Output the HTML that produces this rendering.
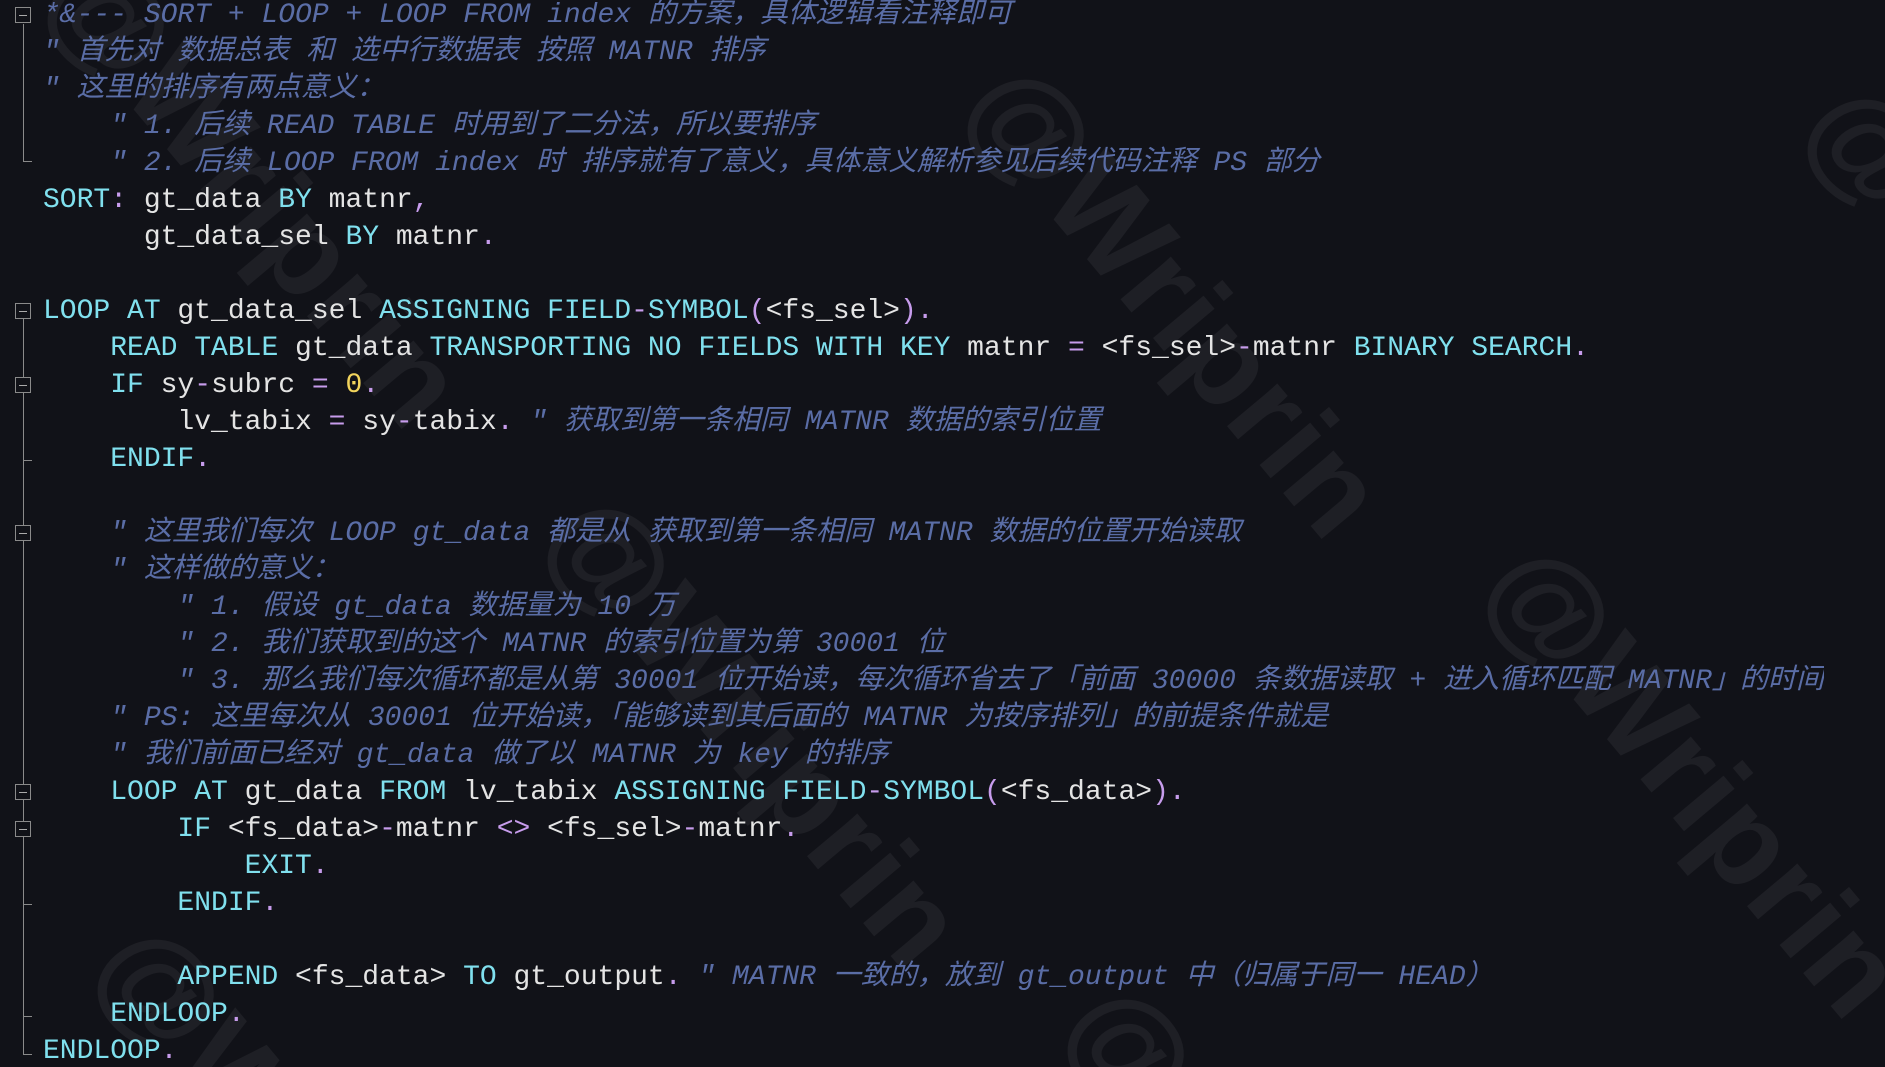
<!DOCTYPE html>
<html><head><meta charset="utf-8">
<style>
html,body{margin:0;padding:0;width:1885px;height:1067px;overflow:hidden}
body{background:#111218;font-family:"Liberation Mono","Noto Sans CJK SC",monospace;}
#wrap{position:relative;width:1885px;height:1067px;overflow:hidden;background:#111218}
.wm{position:absolute;font-family:"Liberation Sans",sans-serif;font-weight:bold;font-size:125px;line-height:125px;color:#1e1f25;transform:rotate(50deg);transform-origin:0 0;white-space:nowrap;letter-spacing:2px}
pre{position:absolute;left:43px;top:-3px;height:1068px;overflow:hidden;margin:0;font-size:28px;line-height:37px;color:#e4e4e4;font-family:"Liberation Mono","Noto Sans CJK SC",monospace;}
.k{color:#80e0ee}.p{color:#c79cec}.n{color:#f2d45c}
.c{color:#5a6da6;font-style:italic}
.g{position:absolute;background:#8a8a8a}
.b{position:absolute;width:16px;height:16px;border:1px solid #8a8a8a;box-sizing:border-box;background:#111218}
.b:after{content:"";position:absolute;left:3px;right:3px;top:7px;height:1px;background:#aaa}
</style></head><body><div id="wrap">
<div class="wm" style="left:120px;top:-70px">@Wriprin</div>
<div class="wm" style="left:1040px;top:40px">@Wriprin</div>
<div class="wm" style="left:1880px;top:60px">@Wriprin</div>
<div class="wm" style="left:620px;top:470px">@Wriprin</div>
<div class="wm" style="left:1560px;top:520px">@Wriprin</div>
<div class="wm" style="left:170px;top:900px">@Wriprin</div>
<div class="wm" style="left:1140px;top:960px">@Wriprin</div>

<div class="g" style="left:23px;top:24px;width:1px;height:138px"></div>
<div class="g" style="left:23px;top:161px;width:9px;height:1px"></div>
<div class="b" style="left:15px;top:7px"></div>

<div class="g" style="left:23px;top:318px;width:1px;height:737px"></div>
<div class="g" style="left:23px;top:1054px;width:9px;height:1px"></div>
<div class="g" style="left:23px;top:460px;width:9px;height:1px"></div>
<div class="g" style="left:23px;top:904px;width:9px;height:1px"></div>
<div class="g" style="left:23px;top:1016px;width:9px;height:1px"></div>
<div class="b" style="left:15px;top:303px"></div>
<div class="b" style="left:15px;top:377px"></div>
<div class="b" style="left:15px;top:525px"></div>
<div class="b" style="left:15px;top:784px"></div>
<div class="b" style="left:15px;top:821px"></div>

<pre><span class="c">*&amp;--- SORT + LOOP + LOOP FROM index 的方案，具体逻辑看注释即可</span>
<span class="c">" 首先对 数据总表 和 选中行数据表 按照 MATNR 排序</span>
<span class="c">" 这里的排序有两点意义：</span>
    <span class="c">" 1. 后续 READ TABLE 时用到了二分法，所以要排序</span>
    <span class="c">" 2. 后续 LOOP FROM index 时 排序就有了意义，具体意义解析参见后续代码注释 PS 部分</span>
<span class="k">SORT</span><span class="p">:</span> gt_data <span class="k">BY</span> matnr<span class="p">,</span>
      gt_data_sel <span class="k">BY</span> matnr<span class="p">.</span>

<span class="k">LOOP AT</span> gt_data_sel <span class="k">ASSIGNING FIELD</span><span class="p">-</span><span class="k">SYMBOL</span><span class="p">(</span>&lt;fs_sel&gt;<span class="p">).</span>
    <span class="k">READ TABLE</span> gt_data <span class="k">TRANSPORTING NO FIELDS WITH KEY</span> matnr <span class="p">=</span> &lt;fs_sel&gt;<span class="p">-</span>matnr <span class="k">BINARY SEARCH</span><span class="p">.</span>
    <span class="k">IF</span> sy<span class="p">-</span>subrc <span class="p">=</span> <span class="n">0</span><span class="p">.</span>
        lv_tabix <span class="p">=</span> sy<span class="p">-</span>tabix<span class="p">.</span> <span class="c">" 获取到第一条相同 MATNR 数据的索引位置</span>
    <span class="k">ENDIF</span><span class="p">.</span>

    <span class="c">" 这里我们每次 LOOP gt_data 都是从 获取到第一条相同 MATNR 数据的位置开始读取</span>
    <span class="c">" 这样做的意义：</span>
        <span class="c">" 1. 假设 gt_data 数据量为 10 万</span>
        <span class="c">" 2. 我们获取到的这个 MATNR 的索引位置为第 30001 位</span>
        <span class="c">" 3. 那么我们每次循环都是从第 30001 位开始读，每次循环省去了「前面 30000 条数据读取 + 进入循环匹配 MATNR」的时间</span>
    <span class="c">" PS: 这里每次从 30001 位开始读，「能够读到其后面的 MATNR 为按序排列」的前提条件就是</span>
    <span class="c">" 我们前面已经对 gt_data 做了以 MATNR 为 key 的排序</span>
    <span class="k">LOOP AT</span> gt_data <span class="k">FROM</span> lv_tabix <span class="k">ASSIGNING FIELD</span><span class="p">-</span><span class="k">SYMBOL</span><span class="p">(</span>&lt;fs_data&gt;<span class="p">).</span>
        <span class="k">IF</span> &lt;fs_data&gt;<span class="p">-</span>matnr <span class="p">&lt;&gt;</span> &lt;fs_sel&gt;<span class="p">-</span>matnr<span class="p">.</span>
            <span class="k">EXIT</span><span class="p">.</span>
        <span class="k">ENDIF</span><span class="p">.</span>

        <span class="k">APPEND</span> &lt;fs_data&gt; <span class="k">TO</span> gt_output<span class="p">.</span> <span class="c">" MATNR 一致的，放到 gt_output 中（归属于同一 HEAD）</span>
    <span class="k">ENDLOOP</span><span class="p">.</span>
<span class="k">ENDLOOP</span><span class="p">.</span></pre>
</div></body></html>
